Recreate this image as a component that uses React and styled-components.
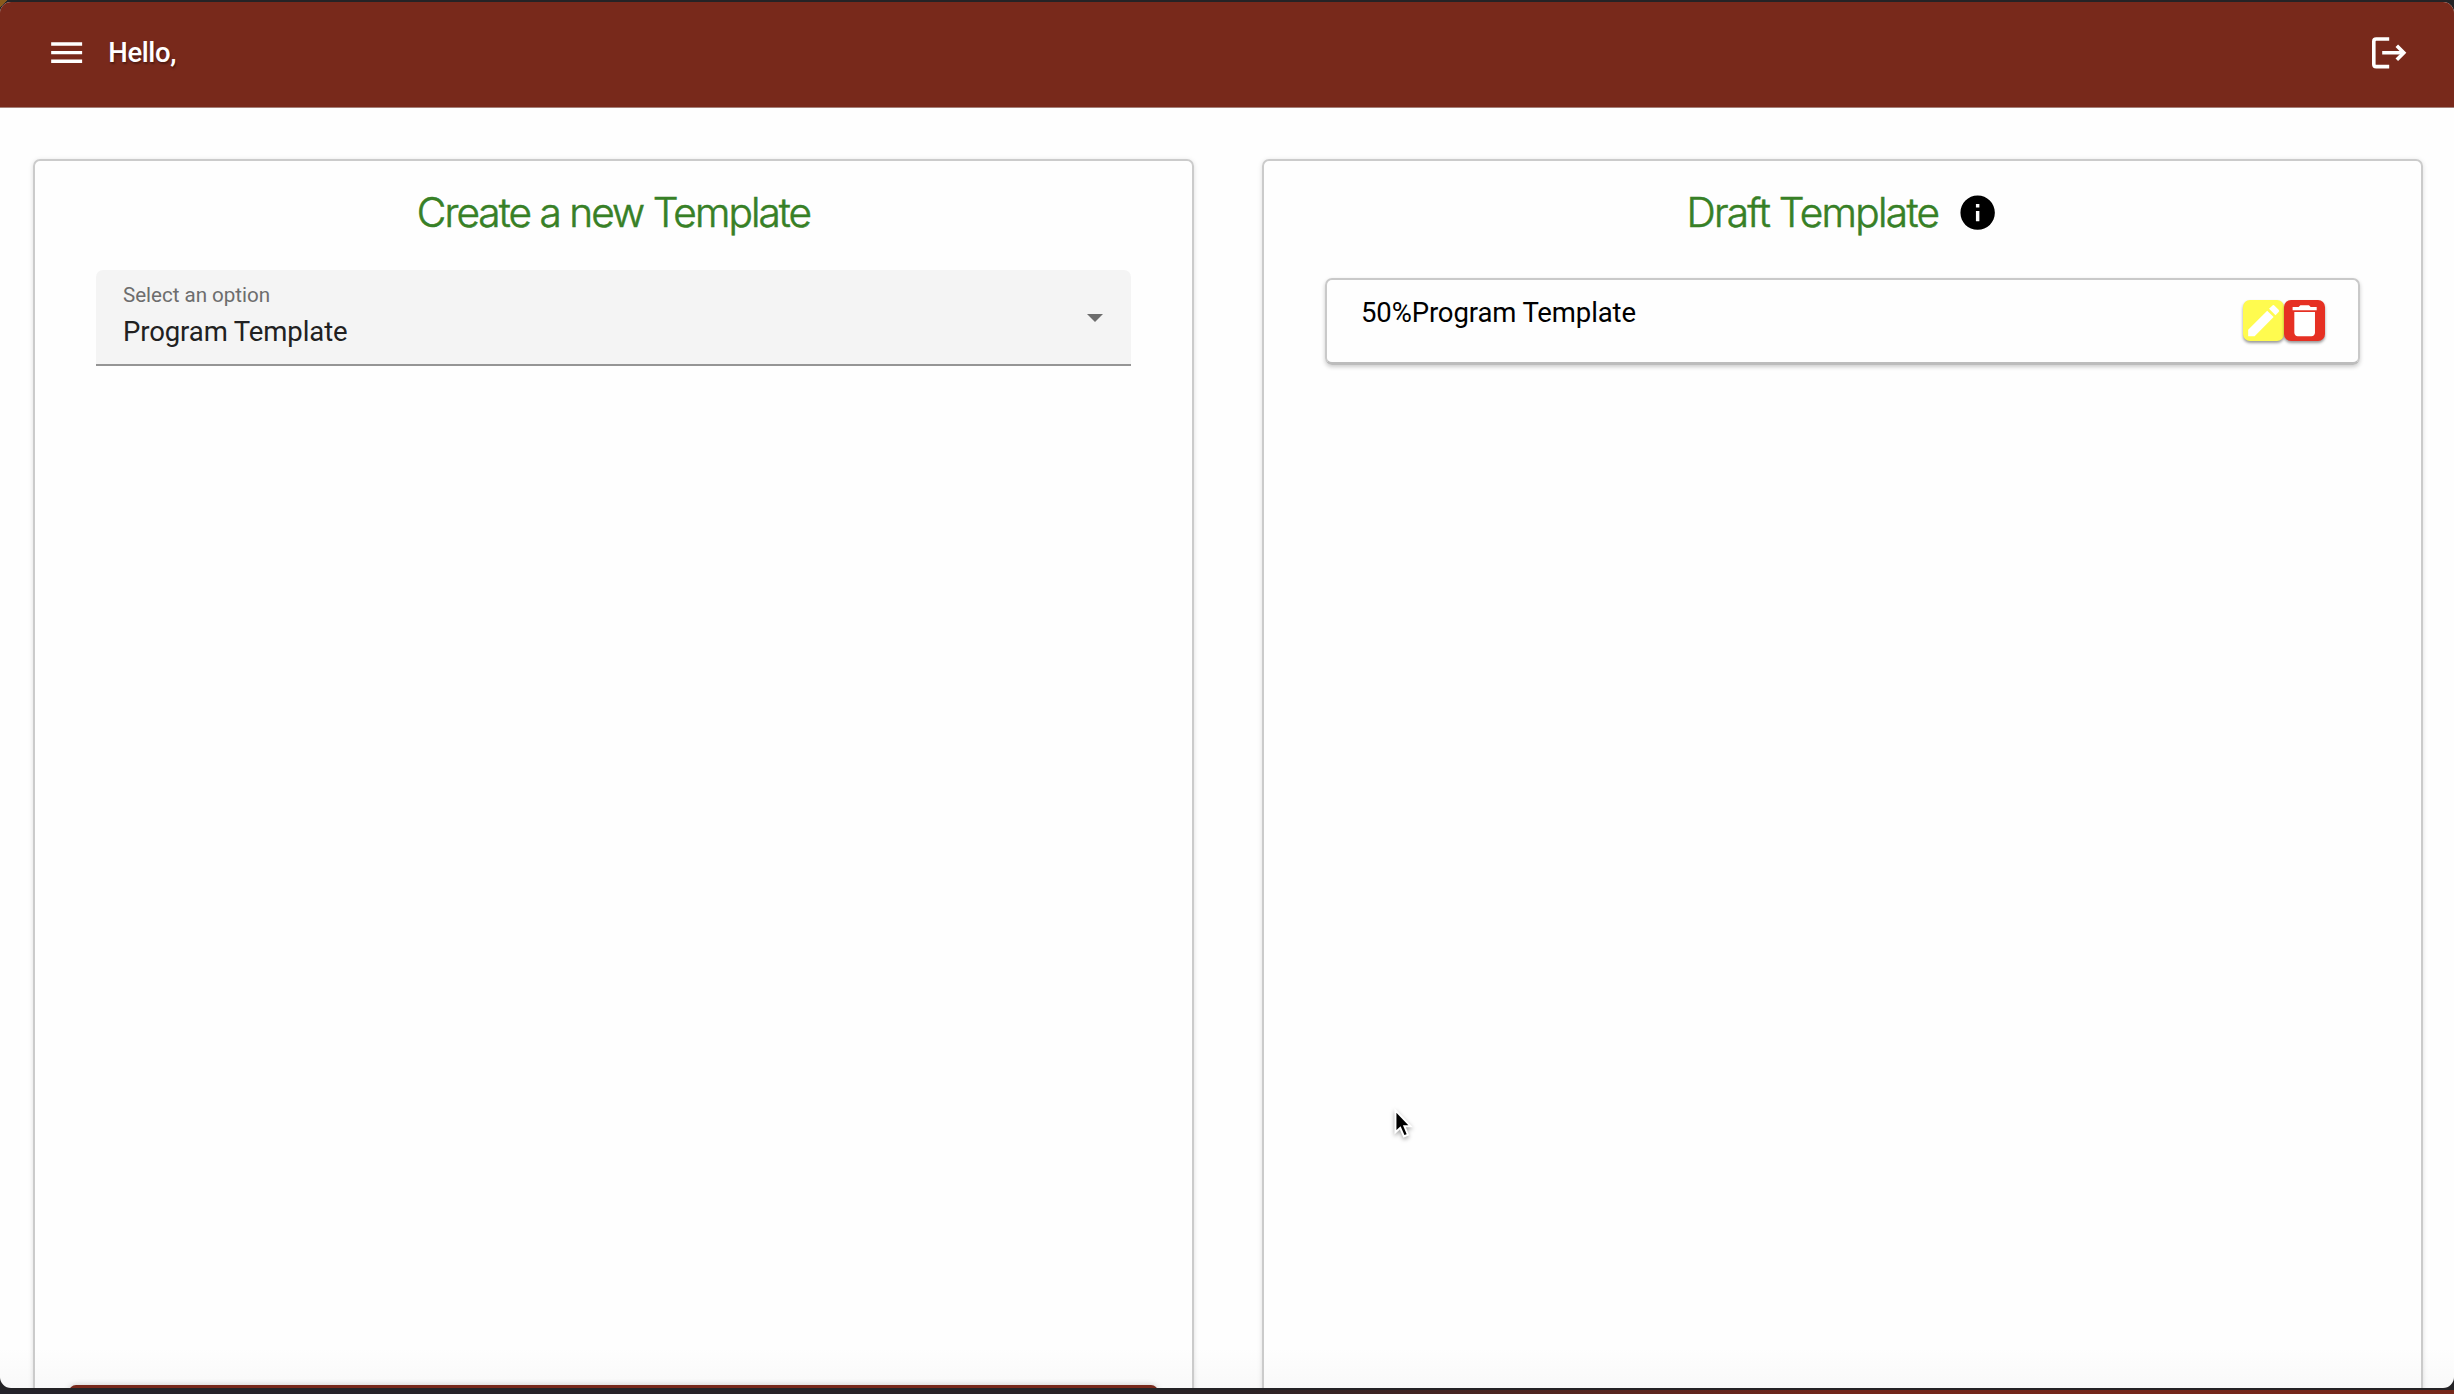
import React from "react";
import styled, { createGlobalStyle } from "styled-components";

const Global = createGlobalStyle`
  *, *::before, *::after { box-sizing: border-box; }
  html, body { margin: 0; padding: 0; background: #242326; overflow: hidden; }
  body { font-family: Roboto, "Liberation Sans", sans-serif; }
  svg { display: block; flex: none; }
`;

const Desktop = styled.div`
  height: 1394px;
  padding: 2px 0 6px;
  background:
    linear-gradient(90deg, #24232b, #2a2326 50%, #71261b 75%, #75271b) bottom / 100% 4px no-repeat,
    linear-gradient(135deg, #8a5a1c 5px, transparent 5px),
    #242326;
`;

const Window = styled.div`
  height: 1386px;
  display: flex;
  flex-direction: column;
  border-radius: 11px;
  overflow: hidden;
  background: linear-gradient(#fefefe calc(100% - 40px), #f9f9f9);
`;

const Header = styled.header`
  flex: none;
  height: 106px;
  padding: 0 38px 3px 46px;
  display: flex;
  align-items: center;
  gap: 21px;
  background: #78291b;
  border-bottom: 1px solid #a58079;
  color: #fff;
`;

const Greeting = styled.span`
  flex: 1;
  font-size: 27.5px;
  font-weight: 500;
  line-height: 40px;
  letter-spacing: -0.4px;
  text-shadow: 1px 2px 2px rgba(0, 0, 0, 0.35);
`;

const Columns = styled.main`
  flex: 1;
  min-height: 0;
  display: grid;
  grid-template-columns: 1161px 1161px;
  column-gap: 68px;
  padding: 51px 0 0 33px;
`;

const Panel = styled.section`
  height: 1300px;
  padding: 30px 61px 0;
  display: flex;
  flex-direction: column;
  border: 2px solid #cbcbcb;
  border-radius: 7px;
  box-shadow: 0 1px 5px rgba(0, 0, 0, 0.13);
`;

const Heading = styled.h1`
  margin: 0;
  height: 44px;
  display: flex;
  align-items: center;
  justify-content: center;
  gap: 19px;
  color: #378026;
  font-family: Inter, "Liberation Sans", sans-serif;
  font-size: 40.6px;
  font-weight: 300;
  line-height: 44px;
  letter-spacing: ${(p) => p.$tracking};
  -webkit-text-stroke: 0.55px #378026;
  white-space: nowrap;
`;

const Select = styled.div`
  height: 96px;
  margin-top: 35px;
  padding: 12px 28px 0 27px;
  display: flex;
  justify-content: space-between;
  background: #f4f4f4;
  border-bottom: 2px solid #959595;
  border-radius: 7px 7px 0 0;
`;

const Field = styled.div`
  display: flex;
  flex-direction: column;
`;

const Label = styled.span`
  font-size: 20.6px;
  line-height: 26px;
  letter-spacing: -0.03px;
  color: #6d6d6d;
`;

const Value = styled.span`
  margin-top: 6px;
  font-size: 27.5px;
  line-height: 36px;
  letter-spacing: -0.1px;
  color: #212121;
`;

const Caret = styled.span`
  margin-top: 32px;
  width: 0;
  height: 0;
  border: 8.5px solid transparent;
  border-top-color: #6d6d6d;
  border-bottom: 0;
`;

const SubmitButton = styled.button`
  flex: none;
  height: 60px;
  margin: auto -27px 12px;
  border: 0;
  border-radius: 7px;
  background: #78291b;
  box-shadow: 0 0 6px rgba(0, 0, 0, 0.2);
`;

const Draft = styled.article`
  height: 87px;
  margin-top: 43px;
  padding: 20px 33.5px 0 34px;
  display: flex;
  justify-content: space-between;
  border: 2px solid #c9c9c9;
  border-bottom: 3px solid #bcbcbc;
  border-radius: 7px;
  box-shadow: 0 2px 4px rgba(0, 0, 0, 0.2);
`;

const DraftName = styled.span`
  margin-top: -3px;
  font-size: 27.5px;
  line-height: 32px;
  letter-spacing: -0.12px;
  color: #000;
`;

const Actions = styled.div`
  display: flex;
`;

const Action = styled.button`
  width: 41px;
  height: 41px;
  padding: 0;
  border: 0;
  border-radius: 7px;
  display: grid;
  place-items: center;
  color: #fff;
  background: ${(p) => p.$color};
  box-shadow: 0 2px 3px rgba(0, 0, 0, 0.4);
`;

const Pointer = styled.svg`
  position: absolute;
  left: 1390px;
  top: 1106px;
  filter: drop-shadow(0 2px 2px rgba(0, 0, 0, 0.35));
`;

const Icon = ({ d, size = 41.3, color = "currentColor" }) => (
  <svg width={size} height={size} viewBox="0 0 24 24" fill={color}>
    <path d={d} />
  </svg>
);

const MENU = "M3 18h18v-2H3v2zm0-5h18v-2H3v2zm0-7v2h18V6H3z";
const INFO =
  "M12 2C6.48 2 2 6.48 2 12s4.48 10 10 10 10-4.48 10-10S17.52 2 12 2zm1 15h-2v-6h2v6zm0-8h-2V7h2v2z";
const EDIT =
  "M3 17.25V21h3.75L17.81 9.94l-3.75-3.75L3 17.25zM20.71 7.04a1 1 0 0 0 0-1.41l-2.34-2.34a1 1 0 0 0-1.41 0l-1.83 1.83 3.75 3.75 1.83-1.83z";
const TRASH =
  "M6 19c0 1.1.9 2 2 2h8c1.1 0 2-.9 2-2V7H6v12zM19 4h-3.5l-1-1h-5l-1 1H5v2h14V4z";

const LogoutIcon = () => (
  <svg width="44" height="42" viewBox="0 0 44 42" fill="none" stroke="#fff" strokeWidth="3.6">
    <path d="M17.2 7H4.2Q1.8 7 1.8 9.4V32.2Q1.8 34.6 4.2 34.6H17.2" />
    <path d="M10.2 20.8H31" />
    <path d="M24.8 13.8L31.8 20.8L24.8 27.8" />
  </svg>
);

export default function App() {
  return (
    <>
      <Global />
      <Desktop>
        <Window>
          <Header>
            <Icon d={MENU} />
            <Greeting>Hello,</Greeting>
            <LogoutIcon />
          </Header>
          <Columns>
            <Panel>
              <Heading $tracking="-1.95px">Create a new Template</Heading>
              <Select>
                <Field>
                  <Label>Select an option</Label>
                  <Value>Program Template</Value>
                </Field>
                <Caret />
              </Select>
              <SubmitButton />
            </Panel>
            <Panel>
              <Heading $tracking="-1.7px">
                Draft Template
                <Icon d={INFO} color="#000" />
              </Heading>
              <Draft>
                <DraftName>50%Program Template</DraftName>
                <Actions>
                  <Action $color="#fffb4f">
                    <Icon d={EDIT} />
                  </Action>
                  <Action $color="#e63023">
                    <Icon d={TRASH} />
                  </Action>
                </Actions>
              </Draft>
            </Panel>
          </Columns>
        </Window>
      </Desktop>
      <Pointer width="24" height="35" viewBox="0 0 22 32">
        <path
          d="M5 4V24L9.4 20L12.8 27.8L16.4 26.2L13.2 18.6H19Z"
          fill="#000"
          stroke="#fff"
          strokeWidth="1.8"
        />
      </Pointer>
    </>
  );
}
